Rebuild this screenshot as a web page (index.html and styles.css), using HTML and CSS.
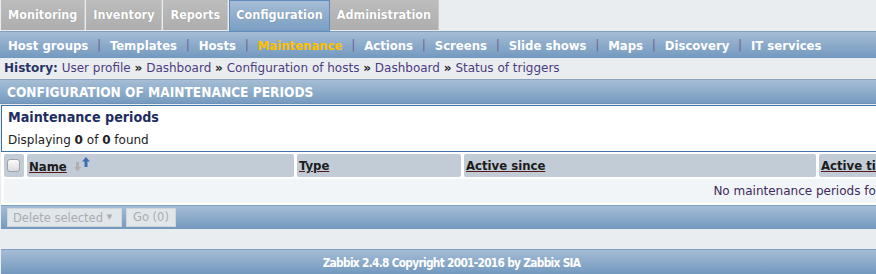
FILE: index.html
```html
<!DOCTYPE html>
<html lang="en">
<head>
	<meta charset="UTF-8">
	<title>Configuration of maintenance periods</title>
	<link rel="stylesheet" href="styles.css">
</head>
<body>
	<div class="page">
		<!-- 主菜单 -->
		<div class="top_menu">
			<a href="javascript:;" class="top_tab">Monitoring</a>
			<a href="javascript:;" class="top_tab">Inventory</a>
			<a href="javascript:;" class="top_tab">Reports</a>
			<a href="javascript:;" class="top_tab current">Configuration</a>
			<a href="javascript:;" class="top_tab">Administration</a>
		</div>

		<!-- 子菜单 -->
		<div class="sub_menu">
			<a href="javascript:;">Host groups</a><span class="sep">|</span>
			<a href="javascript:;">Templates</a><span class="sep">|</span>
			<a href="javascript:;">Hosts</a><span class="sep">|</span>
			<a href="javascript:;" class="current">Maintenance</a><span class="sep">|</span>
			<a href="javascript:;">Actions</a><span class="sep">|</span>
			<a href="javascript:;">Screens</a><span class="sep">|</span>
			<a href="javascript:;">Slide shows</a><span class="sep">|</span>
			<a href="javascript:;">Maps</a><span class="sep">|</span>
			<a href="javascript:;">Discovery</a><span class="sep">|</span>
			<a href="javascript:;">IT services</a>
		</div>

		<div class="history">
			<b>History:</b>
			<a href="javascript:;">User profile</a> <span class="raquo">&raquo;</span>
			<a href="javascript:;">Dashboard</a> <span class="raquo">&raquo;</span>
			<a href="javascript:;">Configuration of hosts</a> <span class="raquo">&raquo;</span>
			<a href="javascript:;">Dashboard</a> <span class="raquo">&raquo;</span>
			<a href="javascript:;">Status of triggers</a>
		</div>

		<div class="header_bar">CONFIGURATION OF MAINTENANCE PERIODS</div>

		<div class="list_box">
			<div class="list_title">Maintenance periods</div>
			<div class="list_count">Displaying <b>0</b> of <b>0</b> found</div>
		</div>

		<!-- 列表 -->
		<div class="table_wrap">
			<table class="list_table">
				<tr class="head">
					<td class="col_check"><span class="checkbox"></span></td>
					<td class="col_name">
						<a href="javascript:;">Name</a>
						<svg class="sort_icon" width="17" height="15" viewBox="0 0 17 15">
							<path d="M2 5h3v5h2l-3.5 4.5-3.5-4.5h2z" fill="#b0b0b0"/>
							<path d="M12 0l4 4.5h-2.5v5.5h-3v-5.5h-2.5z" fill="#3d70b2"/>
						</svg>
					</td>
					<td class="col_type"><a href="javascript:;">Type</a></td>
					<td class="col_since"><a href="javascript:;">Active since</a></td>
					<td class="col_till"><a href="javascript:;">Active till</a></td>
					<td class="col_state"><a href="javascript:;">State</a></td>
					<td class="col_desc">Description</td>
				</tr>
				<tr class="empty_row">
					<td colspan="7">No maintenance periods found</td>
				</tr>
			</table>
		</div>

		<div class="action_bar">
			<span class="fake_select">Delete selected <span class="arrow">&#9660;</span></span>
			<span class="fake_button">Go (0)</span>
		</div>

		<div class="gap"></div>

		<div class="footer">Zabbix 2.4.8 Copyright 2001-2016 by Zabbix SIA</div>
	</div>
</body>
</html>
```

FILE: styles.css
```css
body {
	margin: 0;
	padding: 0;
	background: #eaedf0;
	font-family: "DejaVu Sans", sans-serif;
	font-size: 12px;
	color: #222;
	overflow: hidden;
}

a { text-decoration: none; }

.page { width: 902px; }

/* 主菜单 */
.top_menu {
	display: flex;
	height: 31px;
	padding-left: 1px;
	font-family: "DejaVu Sans Condensed", "DejaVu Sans", sans-serif;
}

.top_tab {
	display: block;
	height: 30px;
	line-height: 29px;
	padding: 0 7px;
	margin-right: 1px;
	font-weight: bold;
	font-size: 12.5px;
	color: #fff;
	text-shadow: 0 0 1px rgba(0, 0, 0, .25);
	background: linear-gradient(#bdbdbd, #aeaeae);
	border-right: 1px solid #c8c8c8;
}

.top_tab.current {
	background: linear-gradient(#a6bdd5, #7a9ec2);
	border: 1px solid #5f8cba;
	line-height: 28px;
	padding: 0 6px;
	margin-right: 0;
}

/* 子菜单 */
.sub_menu {
	display: flex;
	align-items: center;
	height: 27px;
	padding-left: 8px;
	background: linear-gradient(#a5bcd5, #7399bf);
	border-top: 1px solid #7f9fc0;
	box-sizing: border-box;
	white-space: nowrap;
	font-family: "DejaVu Sans Condensed", "DejaVu Sans", sans-serif;
}

.sub_menu a {
	font-weight: bold;
	font-size: 13px;
	color: #fff;
}

.sub_menu a.current { color: #ffc000; }

.sub_menu .sep {
	color: #6b5a8c;
	padding: 0 9px;
	font-size: 12px;
}

.history {
	height: 21px;
	line-height: 21px;
	padding-left: 4px;
	font-size: 12px;
	border-bottom: 1px solid #8aa4bd;
	white-space: nowrap;
}

.history b { color: #2a3566; }
.history a { color: #4b3c80; }
.history .raquo { color: #222; font-weight: bold; }

.header_bar {
	height: 23px;
	line-height: 24px;
	padding-left: 7px;
	font-family: "DejaVu Sans Condensed", "DejaVu Sans", sans-serif;
	font-weight: bold;
	font-size: 13.6px;
	color: #fff;
	background: linear-gradient(#a6bdd5, #769bc0);
	border-bottom: 1px solid #6d92b8;
}

.list_box {
	margin: 1px 0 0 1px;
	background: #fff;
	border-top: 1px solid #3f71a5;
	border-bottom: 1px solid #3f71a5;
	border-left: 1px solid #3f71a5;
	padding-left: 6px;
}

.list_title {
	font-family: "DejaVu Sans Condensed", "DejaVu Sans", sans-serif;
	font-weight: bold;
	font-size: 14.2px;
	color: #1e2d60;
	height: 22px;
	line-height: 23px;
}

.list_count {
	padding-top: 2px;
	height: 21px;
	line-height: 21px;
}

/* 列表 */
.table_wrap {
	width: 1610px;
	margin-left: 1px;
	background: #fff;
}

.list_table {
	width: 1610px;
	border-collapse: separate;
	border-spacing: 3px 2px;
}

.list_table td { padding: 0; }

.list_table .head td {
	background: #c1ccd6;
	height: 23px;
	padding-left: 2px;
	border-radius: 2px;
	font-family: "DejaVu Sans Condensed", "DejaVu Sans", sans-serif;
	font-weight: bold;
	font-size: 13px;
	white-space: nowrap;
}

.list_table .head a {
	color: #1c1c1c;
	text-decoration: underline;
	text-decoration-color: #5a1a1a;
}

.col_check { width: 18px; }
.col_name { width: 265px; }
.col_type { width: 162px; }
.col_since { width: 350px; }
.col_till { width: 200px; }
.col_state { width: 150px; }

.checkbox {
	display: block;
	width: 11px;
	height: 11px;
	margin-left: 1px;
	border: 1px solid #9aa3ab;
	border-radius: 3px;
	background: linear-gradient(#fafafa, #dcdcdc);
}

.sort_icon { vertical-align: -1px; margin-left: 3px; }

.empty_row td {
	background: #f2f5f8;
	height: 24px;
	text-align: center;
	color: #3e2a5c;
}

.action_bar {
	display: flex;
	align-items: center;
	height: 23px;
	padding-left: 6px;
	gap: 4px;
	background: linear-gradient(#a5bcd5, #7399bf);
	border-top: 1px solid #7f9fc0;
	margin-left: 1px;
}

.fake_select,
.fake_button {
	display: block;
	height: 17px;
	line-height: 17px;
	font-size: 11.5px;
	color: #a9adb1;
	background: #e1e6eb;
	border: 1px solid #cfd5db;
}

.fake_select { width: 105px; padding: 0 3px 0 5px; }
.fake_select .arrow { font-size: 7px; vertical-align: 3px; }
.fake_button { padding: 0 6px; }

.gap { height: 20px; }

.footer {
	height: 24px;
	line-height: 26px;
	text-align: center;
	font-family: "DejaVu Sans Condensed", "DejaVu Sans", sans-serif;
	font-weight: bold;
	font-size: 11.8px;
	letter-spacing: -0.7px;
	color: #fff;
	background: linear-gradient(#a5bcd5, #7399bf);
	border-top: 1px solid #7f9fc0;
	margin-left: 1px;
}
```
